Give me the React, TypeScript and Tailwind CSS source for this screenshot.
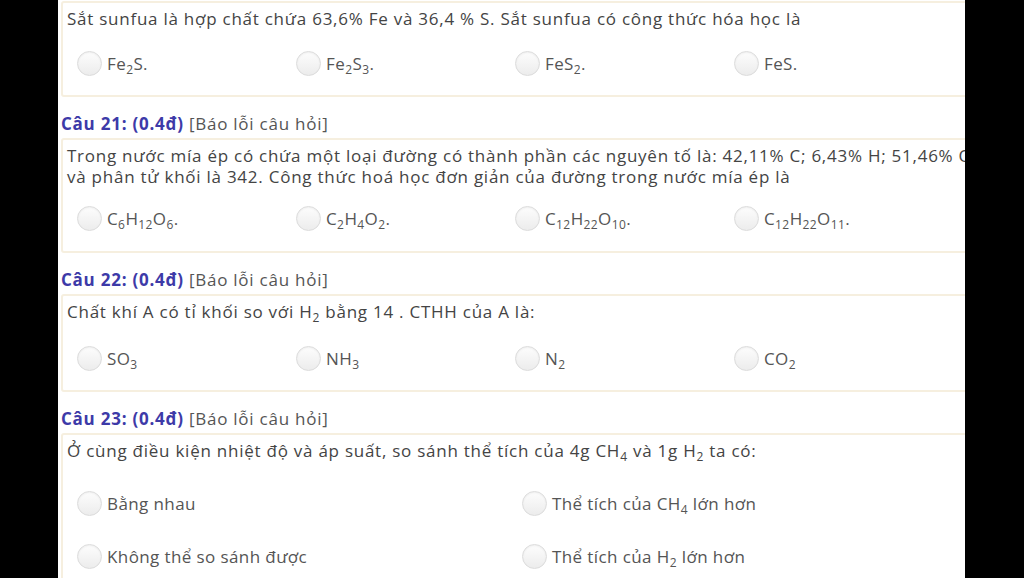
import React from 'react';

type Opt = React.ReactNode;

const F = (...parts: (string | [string])[]) => (
  <>
    {parts.map((p, i) =>
      typeof p === 'string' ? (
        <span key={i}>{p}</span>
      ) : (
        <sub key={i} className="text-[12px] -bottom-[0.35em]">
          {p[0]}
        </sub>
      )
    )}
  </>
);

const Radio = () => (
  <span className="w-[25px] h-[25px] shrink-0 rounded-full border border-[#dcdcdc] bg-gradient-to-b from-[#fdfdfd] to-[#ececec] shadow-[inset_0_1px_2px_rgba(0,0,0,0.06)]" />
);

const Option = ({ children }: { children: Opt }) => (
  <label className="flex items-center gap-[5px] h-[25px] text-[#555] cursor-pointer">
    <Radio />
    <span className="whitespace-nowrap">{children}</span>
  </label>
);

const Header = ({ n, mt = 17 }: { n: number; mt?: number }) => (
  <p className="mb-[4px] h-[21px] leading-[21px]" style={{ marginTop: mt }}>
    <span className="font-bold text-[#3d3aa8]">Câu {n}: (0.4đ)</span>{' '}
    <span className="text-[#555]">[Báo lỗi câu hỏi]</span>
  </p>
);

const Card = ({
  children,
  options,
  cols = 4,
  top = 23,
  bottom = 21,
}: {
  children: React.ReactNode;
  options: Opt[];
  cols?: 2 | 4;
  top?: number;
  bottom?: number;
}) => (
  <div className="border-2 border-[#f6efdf] rounded-[3px] px-[3px] pt-[5px]">
    <div className="leading-[21px] text-[#444] pl-[1px] whitespace-nowrap">{children}</div>
    <div
      className={`grid ml-[11px] tracking-[0.4px] ${
        cols === 4
          ? 'grid-cols-[219px_219px_219px_219px] gap-y-[28px]'
          : 'grid-cols-[445px_445px] gap-y-[28px]'
      }`}
      style={{ paddingTop: top, paddingBottom: bottom }}
    >
      {options.map((o, i) => (
        <Option key={i}>{o}</Option>
      ))}
    </div>
  </div>
);

export default function App() {
  return (
    <div
      className="flex w-[1024px] h-[578px] bg-black overflow-hidden text-[17px] tracking-[0.75px]"
      style={{ fontFamily: '"Open Sans", "Noto Sans", sans-serif' }}
    >
      <div className="w-[58px] shrink-0" />
      <div className="w-[907px] shrink-0 bg-white overflow-hidden">
        <div className="w-[960px] pl-[3px] pt-[1px]">
          <Card
            top={22}
            bottom={19}
            options={[
              F('Fe', ['2'], 'S.'),
              F('Fe', ['2'], 'S', ['3'], '.'),
              F('FeS', ['2'], '.'),
              F('FeS.'),
            ]}
          >
            Sắt sunfua là hợp chất chứa 63,6% Fe và 36,4 % S. Sắt sunfua có công thức hóa học là
          </Card>

          <Header n={21} mt={16} />
          <Card
            top={19}
            bottom={20}
            options={[
              F('C', ['6'], 'H', ['12'], 'O', ['6'], '.'),
              F('C', ['2'], 'H', ['4'], 'O', ['2'], '.'),
              F('C', ['12'], 'H', ['22'], 'O', ['10'], '.'),
              F('C', ['12'], 'H', ['22'], 'O', ['11'], '.'),
            ]}
          >
            Trong nước mía ép có chứa một loại đường có thành phần các nguyên tố là: 42,11% C; 6,43% H; 51,46% O
            <br />
            và phân tử khối là 342. Công thức hoá học đơn giản của đường trong nước mía ép là
          </Card>

          <Header n={22} mt={16} />
          <Card
            top={24}
            bottom={19}
            options={[F('SO', ['3']), F('NH', ['3']), F('N', ['2']), F('CO', ['2'])]}
          >
            Chất khí A có tỉ khối so với H<sub className="text-[12px] -bottom-[0.35em]">2</sub> bằng 14 . CTHH của A là:
          </Card>

          <Header n={23} mt={16} />
          <Card
            cols={2}
            top={30}
            options={[
              F('Bằng nhau'),
              F('Thể tích của CH', ['4'], ' lớn hơn'),
              F('Không thể so sánh được'),
              F('Thể tích của H', ['2'], ' lớn hơn'),
            ]}
          >
            Ở cùng điều kiện nhiệt độ và áp suất, so sánh thể tích của 4g CH
            <sub className="text-[12px] -bottom-[0.35em]">4</sub> và 1g H
            <sub className="text-[12px] -bottom-[0.35em]">2</sub> ta có:
          </Card>
        </div>
      </div>
    </div>
  );
}
